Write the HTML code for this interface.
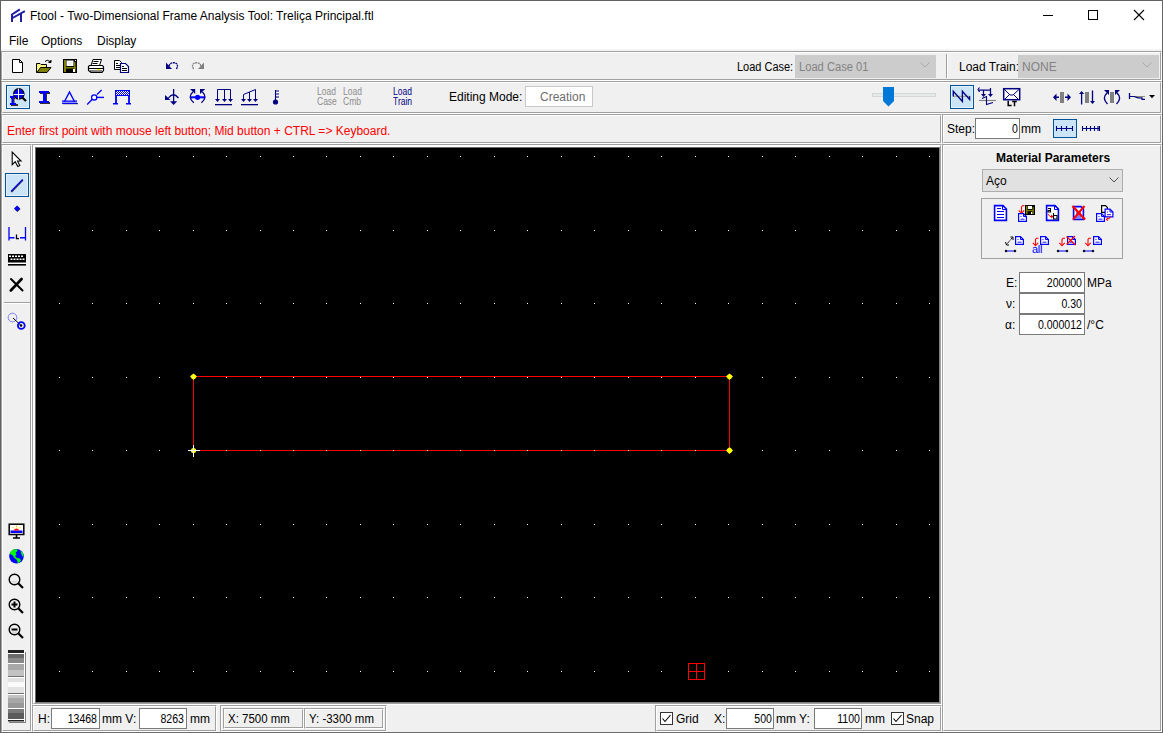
<!DOCTYPE html>
<html><head><meta charset="utf-8">
<style>
*{margin:0;padding:0;box-sizing:border-box}
html,body{width:1163px;height:733px;overflow:hidden}
body{background:#f0f0f0;position:relative;font-family:"Liberation Sans",sans-serif;font-size:12px;color:#000}
.a{position:absolute}
.e{position:absolute;border:1px solid;border-color:#a0a0a0 #fff #fff #a0a0a0}
.e>i{position:absolute;left:0;top:0;right:0;bottom:0;border:1px solid;border-color:#fff #a0a0a0 #a0a0a0 #fff}
.t{position:absolute;white-space:nowrap;line-height:12px}
.hl{position:absolute;height:1px}
.vl{position:absolute;width:1px}
.inp{position:absolute;background:#fff;border:1px solid #7a7a7a}
.sel{position:absolute;background:#cce4f7;border:1px solid #005499}
svg{position:absolute;overflow:visible}
</style></head><body>
<!-- window frame -->
<div class="a" style="left:0;top:0;width:1163px;height:49px;background:#fff"></div>
<div class="hl" style="left:0;top:49px;width:1163px;height:2px;background:#f4f4f4"></div>
<!-- toolbars -->
<div class="e" style="left:1px;top:51px;width:1161px;height:30px"><i></i></div>
<div class="e" style="left:1px;top:81px;width:1161px;height:33px"><i></i></div>
<!-- status boxes -->
<div class="e" style="left:1px;top:114px;width:941px;height:30px"><i></i></div>
<div class="e" style="left:942px;top:114px;width:220px;height:30px"><i></i></div>
<!-- left column -->
<div class="e" style="left:1px;top:144px;width:31px;height:588px"><i></i></div>
<!-- canvas panel -->
<div class="e" style="left:32px;top:144px;width:910px;height:561px"><i></i></div>
<div class="a" style="left:34px;top:146px;width:906px;height:557px;background:#fff"></div><div class="a" style="left:35px;top:147px;width:904px;height:555px;background:#000;border-top:1px solid #696969;border-left:1px solid #696969"></div><div class="vl" style="left:939px;top:147px;height:556px;background:#808080"></div><div class="hl" style="left:35px;top:702px;width:905px;background:#808080"></div>
<!-- right panel -->
<div class="e" style="left:942px;top:144px;width:220px;height:588px"><i></i></div>
<!-- bottom boxes -->
<div class="e" style="left:32px;top:705px;width:185px;height:27px"><i></i></div>
<div class="e" style="left:220px;top:705px;width:167px;height:27px"><i></i></div>
<div class="e" style="left:655px;top:705px;width:287px;height:27px"><i></i></div>
<div class="hl" style="left:0;top:732px;width:1163px;background:#6c6c6c"></div>
<!-- window borders -->
<div class="hl" style="left:0;top:0;width:1163px;background:#616161"></div>
<div class="vl" style="left:0;top:0;height:733px;background:#646464"></div>
<div class="vl" style="left:1162px;top:0;height:733px;background:#666666"></div>

<!-- title -->
<div class="t" style="left:30px;top:10px">Ftool - Two-Dimensional Frame Analysis Tool: Treliça Principal.ftl</div>
<!-- menu -->
<div class="t" style="left:9px;top:35px">File</div>
<div class="t" style="left:41px;top:35px">Options</div>
<div class="t" style="left:97px;top:35px">Display</div>

<!-- toolbar1 right -->
<div class="t" style="left:737px;top:61px;transform:scaleX(0.915);transform-origin:0 0">Load Case:</div>
<div class="a" style="left:795px;top:55px;width:141px;height:23px;background:#cccccc"></div>
<div class="t" style="left:799px;top:61px;color:#838383;transform:scaleX(0.93);transform-origin:0 0">Load Case 01</div>
<div class="vl" style="left:946px;top:54px;height:24px;background:#a0a0a0"></div><div class="vl" style="left:947px;top:54px;height:24px;background:#fff"></div>
<div class="t" style="left:959px;top:61px">Load Train:</div>
<div class="a" style="left:1018px;top:55px;width:141px;height:23px;background:#cccccc"></div>
<div class="t" style="left:1022px;top:61px;color:#838383">NONE</div>

<!-- toolbar2 -->
<div class="t" style="left:449px;top:91px">Editing Mode:</div>
<div class="a" style="left:525px;top:86px;width:68px;height:21px;background:#fff;border:1px solid #c8c8c8"></div>
<div class="t" style="left:540px;top:91px;color:#6d6d6d">Creation</div>

<!-- status -->
<div class="t" style="left:7px;top:125px;color:#ff0000">Enter first point with mouse left button; Mid button + CTRL =&gt; Keyboard.</div>
<div class="t" style="left:947px;top:123px">Step:</div>
<div class="inp" style="left:975px;top:118px;width:45px;height:21px"></div>
<div class="t" style="left:975px;width:43px;text-align:right;top:123px;transform:scaleX(0.88);transform-origin:100% 0">0</div>
<div class="t" style="left:1021px;top:123px">mm</div>

<!-- right panel -->
<div class="t" style="left:996px;top:152px;font-weight:bold">Material Parameters</div>
<div class="a" style="left:982px;top:169px;width:141px;height:23px;background:#e1e1e1;border:1px solid #adadad"></div>
<div class="t" style="left:986px;top:175px">Aço</div>
<div class="a" style="left:981px;top:198px;width:142px;height:61px;border:1px solid #a0a0a0"></div>
<div class="inp" style="left:1019px;top:272px;width:66px;height:21px"></div>
<div class="inp" style="left:1019px;top:293px;width:66px;height:21px"></div>
<div class="inp" style="left:1019px;top:314px;width:66px;height:21px"></div>
<div class="t" style="left:1006px;top:277px">E:</div>
<div class="t" style="left:1019px;width:63px;text-align:right;top:277px;transform:scaleX(0.88);transform-origin:100% 0">200000</div>
<div class="t" style="left:1087px;top:277px">MPa</div>
<div class="t" style="left:1006px;top:298px">ν:</div>
<div class="t" style="left:1019px;width:63px;text-align:right;top:298px;transform:scaleX(0.88);transform-origin:100% 0">0.30</div>
<div class="t" style="left:1005px;top:319px">α:</div>
<div class="t" style="left:1019px;width:63px;text-align:right;top:319px;transform:scaleX(0.88);transform-origin:100% 0">0.000012</div>
<div class="t" style="left:1087px;top:319px">/°C</div>

<!-- bottom -->
<div class="t" style="left:38px;top:713px">H:</div>
<div class="inp" style="left:51px;top:708px;width:49px;height:21px"></div>
<div class="t" style="left:51px;width:46px;text-align:right;top:713px;transform:scaleX(0.88);transform-origin:100% 0">13468</div>
<div class="t" style="left:102px;top:713px">mm V:</div>
<div class="inp" style="left:139px;top:708px;width:48px;height:21px"></div>
<div class="t" style="left:139px;width:45px;text-align:right;top:713px;transform:scaleX(0.88);transform-origin:100% 0">8263</div>
<div class="t" style="left:190px;top:713px">mm</div>
<div class="e" style="left:223px;top:708px;width:81px;height:21px"><i></i></div>
<div class="e" style="left:304px;top:708px;width:80px;height:21px"><i></i></div>
<div class="t" style="left:228px;top:713px;transform:scaleX(0.955);transform-origin:0 0">X: 7500 mm</div>
<div class="t" style="left:309px;top:713px;transform:scaleX(0.955);transform-origin:0 0">Y: -3300 mm</div>
<div class="t" style="left:676px;top:713px">Grid</div>
<div class="t" style="left:714px;top:713px">X:</div>
<div class="inp" style="left:726px;top:708px;width:48px;height:21px"></div>
<div class="t" style="left:726px;width:46px;text-align:right;top:713px;transform:scaleX(0.88);transform-origin:100% 0">500</div>
<div class="t" style="left:776px;top:713px">mm Y:</div>
<div class="inp" style="left:814px;top:708px;width:48px;height:21px"></div>
<div class="t" style="left:814px;width:46px;text-align:right;top:713px;transform:scaleX(0.88);transform-origin:100% 0">1100</div>
<div class="t" style="left:865px;top:713px">mm</div>
<div class="t" style="left:906px;top:713px">Snap</div>


<!-- title icon -->
<svg style="left:0;top:0" width="30" height="30"><g stroke="#1f1f9f" stroke-width="2" fill="none" stroke-linecap="square">
<path d="M12,21 V14.5 L19,10"/><path d="M12.5,18 L24,11.5"/><path d="M21,21 V15"/></g></svg>
<!-- window controls -->
<div class="hl" style="left:1043px;top:15px;width:10px;background:#000"></div>
<div class="a" style="left:1088px;top:10px;width:10px;height:10px;border:1px solid #000"></div>
<svg style="left:1133px;top:9px" width="12" height="12"><path d="M1,1 L11,11 M11,1 L1,11" stroke="#000" stroke-width="1.1"/></svg>

<!-- toolbar1 icons -->
<svg style="left:12px;top:59px" width="12" height="15"><path d="M0.5,0.5 H7.5 L10.5,3.5 V13.5 H0.5 Z" fill="#fff" stroke="#000"/><path d="M7.5,0.5 V3.5 H10.5" fill="none" stroke="#000"/></svg>
<svg style="left:36px;top:59px" width="16" height="15">
<defs><pattern id="ychk" width="2" height="2" patternUnits="userSpaceOnUse"><rect width="2" height="2" fill="#fff"/><rect width="1" height="1" fill="#ffff00"/><rect x="1" y="1" width="1" height="1" fill="#ffff00"/></pattern></defs><path d="M0.5,4.5 H4 L5,5.5 H10.5 V13.5 H0.5 Z" fill="url(#ychk)" stroke="#000"/>
<path d="M1,13.5 L4.5,8.5 H15 L11,13.5 Z" fill="#808000" stroke="#000"/>
<path d="M9,2.5 Q11,0 14,2.5" fill="none" stroke="#000"/><path d="M12.5,3.5 H15 V1" fill="#000" stroke="#000"/></svg>
<svg style="left:63px;top:59px" width="14" height="14"><rect x="0" y="0" width="14" height="14" fill="#000"/><rect x="1" y="1" width="2" height="12" fill="#808000"/><rect x="11" y="3" width="1.5" height="10" fill="#808000"/><rect x="1" y="8" width="12" height="1.5" fill="#808000"/><rect x="3.5" y="1.5" width="7" height="5.5" fill="#fff"/><rect x="4.5" y="2.5" width="5" height="3.5" fill="#f0f0f0"/><rect x="10" y="10" width="2" height="3" fill="#fff"/><rect x="12" y="1" width="1" height="1" fill="#fff"/></svg>
<svg style="left:88px;top:59px" width="17" height="15">
<path d="M5,0.5 H13.5 L11.5,6.5 H3 Z" fill="#fff" stroke="#000"/><path d="M5.5,2.5 H10.5 M4.5,4.5 H9.5" stroke="#000"/>
<path d="M1.5,6.5 H14.5 L15.5,8 V11.5 L14,13.5 H3 L0.5,11.5 V7.5 Z" fill="#fff" stroke="#000" stroke-width="1.2"/>
<path d="M1,9.5 H15 M2,12 H14" stroke="#000" stroke-width="1.2"/><rect x="9" y="10" width="3" height="1.2" fill="#ffff00"/></svg>
<svg style="left:114px;top:60px" width="16" height="14">
<path d="M0.5,0.5 H5.5 L7.5,2.5 V9.5 H0.5 Z" fill="#fff" stroke="#000"/><path d="M2,3.5 H4 M2,5.5 H6 M2,7.5 H6" stroke="#000"/>
<path d="M6.5,3.5 H11.5 L14.5,6.5 V12.5 H6.5 Z" fill="#fff" stroke="#000080" stroke-width="1.2"/><path d="M8,6.5 H10 M8,8.5 H13 M8,10.5 H13" stroke="#000"/></svg>
<svg style="left:166px;top:62px" width="13" height="8"><path d="M0,0.5 L0,7 H6 Z" fill="#000080"/><path d="M3,4 Q4,1 6.5,0.8 Q11,0.5 11.5,3.5 Q11.5,5 10.5,7" fill="none" stroke="#000080" stroke-width="1.3" stroke-dasharray="2 0.6"/></svg>
<svg style="left:192px;top:62px" width="13" height="8"><path d="M12,0.5 L12,7 H6 Z" fill="#808080"/><path d="M9,4 Q8,1 5.5,0.8 Q1,0.5 0.5,3.5 Q0.5,5 1.5,7" fill="none" stroke="#808080" stroke-width="1.3" stroke-dasharray="2 0.6"/></svg>


<!-- toolbar2 icons -->
<div class="sel" style="left:6px;top:85px;width:24px;height:24px"><div class="a" style="left:0;top:0;right:0;bottom:0;border:1px solid #e4f1fb"></div></div>
<svg style="left:6px;top:85px" width="24" height="24">
<circle cx="12.8" cy="8.9" r="5.2" fill="#0000ff" stroke="#000" stroke-width="1.2"/>
<path d="M12.5,3.5 V14.5 M7.5,9.5 H18" stroke="#fff" stroke-width="1"/>
<path d="M16.5,12.8 L20,16" stroke="#000" stroke-width="2.2"/>
<g fill="#403020"><rect x="5" y="12" width="4" height="2"/><rect x="6.5" y="13" width="2" height="7"/><rect x="5" y="19" width="7" height="2"/></g>
<g fill="#0000ff"><rect x="4" y="11" width="4" height="2"/><rect x="5.5" y="12" width="2" height="7"/><rect x="4" y="18" width="6" height="2"/></g>
</svg>
<svg style="left:39px;top:91px" width="12" height="13">
<g fill="#303030"><rect x="1" y="1" width="10" height="2"/><rect x="5" y="2" width="3" height="9"/><rect x="1" y="11" width="10" height="2"/></g>
<g fill="#0000ff"><rect x="0" y="0" width="10" height="2"/><rect x="4" y="1" width="3" height="9"/><rect x="0" y="10" width="10" height="2"/></g></svg>
<svg style="left:62px;top:90px" width="17" height="15">
<path d="M2.5,11.5 L7.5,2 L12.5,11.5" fill="none" stroke="#0000ff" stroke-width="1.4"/>
<rect x="1" y="13" width="15" height="1.2" fill="#303030"/>
<rect x="0" y="10.5" width="15" height="1.3" fill="#0000ff"/><rect x="0" y="12.6" width="15" height="1.3" fill="#0000ff"/></svg>
<svg style="left:86px;top:89px" width="19" height="17">
<path d="M1.2,15.5 L7,9.5 M11,5.5 L15.6,1" stroke="#0000ff" stroke-width="1.3"/>
<circle cx="8.2" cy="8.4" r="2.6" fill="#fff" stroke="#0000ff" stroke-width="1.3"/>
<path d="M10.8,8.4 H18" stroke="#0000ff" stroke-width="1.4"/></svg>
<svg style="left:113px;top:90px" width="19" height="15">
<defs><pattern id="chk" width="2" height="2" patternUnits="userSpaceOnUse"><rect width="2" height="2" fill="#fff"/><rect width="1" height="1" fill="#0000ff"/><rect x="1" y="1" width="1" height="1" fill="#0000ff"/></pattern></defs>
<rect x="2" y="0" width="15" height="6" fill="#0000ff"/><rect x="3" y="1" width="13" height="4" fill="url(#chk)"/>
<path d="M3,5 V13.5 M16,5 V13.5" stroke="#0000ff" stroke-width="1.8"/>
<path d="M0,13.7 H5 M13,13.7 H18" stroke="#0000ff" stroke-width="1.6"/></svg>
<svg style="left:164px;top:89px" width="16" height="17">
<path d="M9.6,0 V13" stroke="#000080" stroke-width="1.3"/>
<path d="M6,12.3 H13.2 L9.6,16 Z" fill="#000080"/>
<path d="M4.5,9 Q9,2.5 14.5,9" fill="none" stroke="#000080" stroke-width="1.3"/>
<path d="M1,6 V11 H6.5 Z" fill="#000080"/></svg>
<svg style="left:189px;top:89px" width="18" height="16">
<path d="M4.8,13.8 Q-1.8,8 3.8,3 M12.4,13.8 Q19,8 13.4,3" fill="none" stroke="#000080" stroke-width="1.4"/>
<path d="M1,0 H6.2 V5 Z M16.2,0 H11 V5 Z" fill="#000080"/>
<rect x="1.5" y="7.3" width="14.5" height="2" fill="#0000ff"/><circle cx="8.6" cy="8.3" r="2.6" fill="#0000ff"/></svg>
<svg style="left:214px;top:89px" width="19" height="17">
<path d="M3.5,0.5 H16.5 M3.5,0.5 V10 M10.5,0.5 V10 M16.5,0.5 V10" fill="none" stroke="#000080" stroke-width="1"/>
<path d="M1,10 H6 L3.5,13 Z M8,10 H13 L10.5,13 Z M14,10 H19 L16.5,13 Z" fill="#000080"/>
<rect x="1" y="15" width="17" height="1.3" fill="#000080"/></svg>
<svg style="left:240px;top:89px" width="19" height="17">
<path d="M3.5,10 V5.5 L15.5,0.5 V10 M9.5,10 V3" fill="none" stroke="#000080" stroke-width="1"/>
<path d="M1,10 H6 L3.5,13 Z M7,10 H12 L9.5,13 Z M13,10 H18 L15.5,13 Z" fill="#000080"/>
<rect x="1" y="15" width="17" height="1.3" fill="#000080"/></svg>
<svg style="left:272px;top:90px" width="8" height="15">
<path d="M3.5,0 V10 M3.5,1 H7 M3.5,4 H7 M3.5,7 H7" stroke="#000080" stroke-width="1.1"/>
<circle cx="3.5" cy="12" r="2.6" fill="#000080"/></svg>
<div class="t" style="left:317px;top:87px;font-size:10px;line-height:10px;color:#8c8c8c;transform:scaleX(0.85);transform-origin:0 0">Load<br>Case</div>
<div class="t" style="left:343px;top:87px;font-size:10px;line-height:10px;color:#8c8c8c;transform:scaleX(0.85);transform-origin:0 0">Load<br>Cmb</div>
<div class="t" style="left:393px;top:87px;font-size:10px;line-height:10px;color:#000080;transform:scaleX(0.85);transform-origin:0 0">Load<br>Train</div>

<!-- slider -->
<div class="a" style="left:872px;top:93px;width:64px;height:4px;background:#e7eaea;border:1px solid #d6d6d6"></div>
<svg style="left:883px;top:87px" width="11" height="20"><path d="M0,0 H11 V14 L5.5,19.5 L0,14 Z" fill="#0078d7"/></svg>

<div class="sel" style="left:950px;top:85px;width:24px;height:24px"><div class="a" style="left:0;top:0;right:0;bottom:0;border:1px solid #e4f1fb"></div></div>
<svg style="left:950px;top:85px" width="24" height="24">
<path d="M3,11.3 H19.6" stroke="#9a9a70" stroke-width="1"/>
<path d="M3.3,11.5 V6.2 L12.4,16.5 V6.2 L19.6,14.4 V11.3" fill="none" stroke="#000080" stroke-width="1.35" stroke-linejoin="miter"/></svg>
<svg style="left:977px;top:87px" width="20" height="19">
<path d="M2,3.2 H14 M6.5,3.2 V8 M13.5,1 V8" stroke="#000080" stroke-width="1.2"/>
<path d="M2.5,0.5 L1,2.5 L2.5,5" fill="none" stroke="#000080" stroke-width="1.1"/>
<path d="M4,7 H9 L6.5,10 Z M11,7 H16 L13.5,10 Z" fill="#000080"/>
<path d="M2,13.5 H19" stroke="#808080" stroke-width="1.1"/>
<path d="M5,11.5 L9.5,9.5 V17.5 L16,15.5" fill="none" stroke="#000080" stroke-width="1.1"/></svg>
<svg style="left:1003px;top:88px" width="18" height="18">
<rect x="0.7" y="0.7" width="16" height="11" fill="#fff" stroke="#000080" stroke-width="1.5"/>
<path d="M1,1 L7,7 H10 L16.5,1 M1.5,11.5 L6.5,6.5 M10.5,6.5 L15.5,11.5" fill="none" stroke="#000080" stroke-width="1"/></svg>
<svg style="left:1006px;top:100px" width="12" height="7"><path d="M2.2,0.8 V5.4 H5.6 M6.2,1.5 H10.8 M8.5,1.5 V6.2" fill="none" stroke="#000" stroke-width="1.5"/></svg>
<svg style="left:1052px;top:91px" width="21" height="13">
<rect x="8" y="1" width="4" height="11" fill="#808080"/>
<path d="M1,6.3 L4.5,2.5 V10 Z M19,6.3 L15.5,2.5 V10 Z" fill="#000080"/>
<path d="M4,6.3 H7 M13,6.3 H16" stroke="#000080" stroke-width="1.4"/></svg>
<svg style="left:1078px;top:90px" width="19" height="15">
<rect x="7" y="2" width="4" height="11" fill="#808080"/>
<path d="M3.6,2 V14.5 M14.5,0.5 V12" stroke="#000080" stroke-width="1.3"/>
<path d="M1,4 L3.6,1 L6.2,4 Z M12,11 H17 L14.5,14 Z" fill="#000080"/></svg>
<svg style="left:1102px;top:90px" width="20" height="15">
<rect x="8" y="2" width="4" height="11" fill="#808080"/>
<path d="M5.5,14 Q-0.5,8 5,3 M14.5,14 Q20.5,8 15,3" fill="none" stroke="#000080" stroke-width="1.4"/>
<path d="M2,0 H7 V5 Z M18,0 H13 V5 Z" fill="#000080"/></svg>
<svg style="left:1128px;top:93px" width="18" height="8">
<path d="M1.5,0 V6" stroke="#000080" stroke-width="1.3"/>
<path d="M7,3.5 H17" stroke="#909080" stroke-width="1"/>
<path d="M1.5,3.5 H6 L10,4.8 H14 V6.3 H17" fill="none" stroke="#000080" stroke-width="1.2"/></svg>
<svg style="left:1149px;top:95px" width="7" height="4"><path d="M0,0 H6 L3,3.2 Z" fill="#000"/></svg>


<!-- left column icons -->
<svg style="left:11px;top:151px" width="12" height="17">
<path d="M1.2,1 V13.6 L4.2,10.7 L6.8,15.5 L8.8,14.6 L6.5,10 H10 Z" fill="#fff" stroke="#000" stroke-width="1.1" stroke-linejoin="miter"/></svg>
<div class="sel" style="left:5px;top:173px;width:24px;height:24px"><div class="a" style="left:0;top:0;right:0;bottom:0;border:1px solid #e4f1fb"></div></div>
<svg style="left:5px;top:173px" width="24" height="24"><path d="M6.5,19 L18,7" stroke="#302850" stroke-width="1.3"/><path d="M6,18.3 L17.6,6.3" stroke="#0000ff" stroke-width="1.2"/></svg>
<svg style="left:13px;top:205px" width="10" height="9"><path d="M1.5,4 L4.5,1 L7.5,4 L4.5,7 Z" fill="#403020"/><path d="M1,3.5 L4,0.5 L7,3.5 L4,6.5 Z" fill="#0000ff"/></svg>
<svg style="left:8px;top:227px" width="19" height="15">
<path d="M1,0 V13.5 M17.5,0 V13.5" stroke="#0000ff" stroke-width="1.3"/>
<path d="M1,10.8 H6.5 M12,10.8 H17.5" stroke="#0000ff" stroke-width="1.6"/>
<path d="M8.5,7.5 V11.7 H11" fill="none" stroke="#000" stroke-width="1.3"/></svg>
<svg style="left:8px;top:253px" width="19" height="14">
<rect x="0" y="1" width="18" height="8.5" fill="#000"/>
<g fill="#fff"><rect x="1" y="2.5" width="2" height="1.5"/><rect x="4" y="2.5" width="2" height="1.5"/><rect x="7" y="2.5" width="2" height="1.5"/><rect x="10" y="2.5" width="2" height="1.5"/><rect x="13" y="2.5" width="2" height="1.5"/>
<rect x="2.5" y="5.5" width="2" height="1.5"/><rect x="5.5" y="5.5" width="2" height="1.5"/><rect x="8.5" y="5.5" width="2" height="1.5"/><rect x="11.5" y="5.5" width="2" height="1.5"/><rect x="14.5" y="5.5" width="2" height="1.5"/>
<rect x="0" y="10" width="18" height="1"/></g>
<rect x="0" y="11" width="18" height="1.6" fill="#000"/></svg>
<svg style="left:9px;top:277px" width="16" height="16">
<path d="M1.8,13.5 L12.6,2" stroke="#000" stroke-width="2.6" stroke-linecap="round"/>
<path d="M2,2 L13.5,13.5" stroke="#000" stroke-width="2" stroke-linecap="round"/></svg>
<div class="hl" style="left:4px;top:302px;width:26px;background:#a0a0a0"></div>
<div class="hl" style="left:4px;top:303px;width:26px;background:#fff"></div>
<svg style="left:7px;top:312px" width="20" height="19">
<circle cx="5.5" cy="5.5" r="4.3" fill="none" stroke="#0000ff" stroke-width="1" stroke-dasharray="1 1.2"/>
<path d="M6,6 L13.5,13" stroke="#000" stroke-width="1"/>
<circle cx="14.3" cy="13.5" r="3.4" fill="none" stroke="#0000ff" stroke-width="1.8"/><circle cx="14" cy="13.5" r="1.3" fill="#000"/></svg>

<svg style="left:8px;top:523px" width="18" height="17">
<rect x="1.2" y="1.2" width="14.6" height="10.3" fill="#fff" stroke="#000" stroke-width="1.5"/>
<rect x="2.5" y="7.5" width="12" height="2.5" fill="#0000ff"/>
<path d="M5.5,7.5 Q8.5,3.5 11.5,7.5 Z" fill="#ff0000"/>
<path d="M8.5,2.5 V4.5 M4.5,4 L6,5.5 M12.5,4 L11,5.5" stroke="#ffd000" stroke-width="1"/>
<path d="M8.5,12 V14.5 M5,15 H12" stroke="#000" stroke-width="1.6"/></svg>
<svg style="left:8px;top:548px" width="17" height="17">
<circle cx="8.5" cy="8.3" r="7.3" fill="#0000ff"/>
<path d="M2.5,4 L5,1.5 L9,1.2 L9.5,3 L7.5,4.5 L8.5,6.5 L7,8 L9,10 L12,10.5 L13,12.5 L11,15 L9.5,14.5 L9,12 L6,9.5 L4.5,7 L2,6 Z M12.5,2.5 L15,5 L15.5,9 L14,8 L13,5 Z" fill="#00ff00"/></svg>
<svg style="left:8px;top:573px" width="17" height="17">
<circle cx="6.5" cy="6.5" r="5.3" fill="#f0f0f0" stroke="#000" stroke-width="1.4"/>
<path d="M4.5,8.5 Q6.5,10 8.5,8.5" stroke="#c0c0c0" fill="none" stroke-width="1"/>
<path d="M10.5,10.5 L15,15" stroke="#000" stroke-width="2.2"/></svg>
<svg style="left:8px;top:598px" width="17" height="17">
<circle cx="6.5" cy="6.5" r="5.3" fill="#f0f0f0" stroke="#000" stroke-width="1.4"/>
<path d="M6.5,3.5 V9.5 M3.5,6.5 H9.5" stroke="#000" stroke-width="2"/>
<path d="M10.5,10.5 L15,15" stroke="#000" stroke-width="2.2"/></svg>
<svg style="left:8px;top:623px" width="17" height="17">
<circle cx="6.5" cy="6.5" r="5.3" fill="#f0f0f0" stroke="#000" stroke-width="1.4"/>
<path d="M3.5,6.5 H9.5" stroke="#000" stroke-width="2"/>
<path d="M4.5,8.7 Q6.5,10 8.5,8.7" stroke="#c0c0c0" fill="none" stroke-width="1"/>
<path d="M10.5,10.5 L15,15" stroke="#000" stroke-width="2.2"/></svg>
<svg style="left:7px;top:650px" width="20" height="74">
<rect x="2" y="2" width="17" height="71" fill="#808080"/>
<rect x="1" y="1" width="17" height="71" fill="#fff"/>
<rect x="1" y="0" width="16" height="3" fill="#202020"/>
<rect x="1" y="4" width="16" height="4" fill="#6a6a6a"/><rect x="1" y="8" width="16" height="5" fill="#8a8a8a"/>
<rect x="1" y="14" width="16" height="6" fill="#a8a8a8"/><rect x="1" y="20" width="16" height="6" fill="#c2c2c2"/>
<rect x="1" y="26" width="16" height="1" fill="#707070"/>
<rect x="1" y="28" width="16" height="4" fill="#e2e2e2"/><rect x="1" y="32" width="16" height="5" fill="#fafafa"/><rect x="1" y="37" width="16" height="6" fill="#e2e2e2"/>
<rect x="1" y="43" width="16" height="1" fill="#707070"/>
<rect x="1" y="45" width="16" height="3" fill="#c2c2c2"/><rect x="1" y="48" width="16" height="5" fill="#a8a8a8"/><rect x="1" y="53" width="16" height="5" fill="#989898"/>
<rect x="1" y="59" width="16" height="4" fill="#7a7a7a"/><rect x="1" y="63" width="16" height="6" fill="#5c5c5c"/>
<rect x="1" y="70" width="16" height="1.5" fill="#202020"/></svg>


<!-- canvas content -->
<svg style="left:0;top:0" width="1163" height="733" shape-rendering="crispEdges">
<g fill="#ff0000"><rect x="193" y="376" width="537" height="1"/><rect x="193" y="450" width="537" height="1"/><rect x="193" y="376" width="1" height="75"/><rect x="729" y="376" width="1" height="75"/></g>
<g fill="#ff0000"><rect x="688" y="663" width="17" height="1"/><rect x="688" y="671" width="17" height="1"/><rect x="688" y="679" width="17" height="1"/><rect x="688" y="663" width="1" height="17"/><rect x="696" y="663" width="1" height="17"/><rect x="704" y="663" width="1" height="17"/></g>
<g fill="#fff"><rect x="59" y="156" width="1" height="1"/><rect x="59" y="230" width="1" height="1"/><rect x="59" y="303" width="1" height="1"/><rect x="59" y="377" width="1" height="1"/><rect x="59" y="450" width="1" height="1"/><rect x="59" y="524" width="1" height="1"/><rect x="59" y="597" width="1" height="1"/><rect x="59" y="671" width="1" height="1"/><rect x="92" y="156" width="1" height="1"/><rect x="92" y="230" width="1" height="1"/><rect x="92" y="303" width="1" height="1"/><rect x="92" y="377" width="1" height="1"/><rect x="92" y="450" width="1" height="1"/><rect x="92" y="524" width="1" height="1"/><rect x="92" y="597" width="1" height="1"/><rect x="92" y="671" width="1" height="1"/><rect x="126" y="156" width="1" height="1"/><rect x="126" y="230" width="1" height="1"/><rect x="126" y="303" width="1" height="1"/><rect x="126" y="377" width="1" height="1"/><rect x="126" y="450" width="1" height="1"/><rect x="126" y="524" width="1" height="1"/><rect x="126" y="597" width="1" height="1"/><rect x="126" y="671" width="1" height="1"/><rect x="159" y="156" width="1" height="1"/><rect x="159" y="230" width="1" height="1"/><rect x="159" y="303" width="1" height="1"/><rect x="159" y="377" width="1" height="1"/><rect x="159" y="450" width="1" height="1"/><rect x="159" y="524" width="1" height="1"/><rect x="159" y="597" width="1" height="1"/><rect x="159" y="671" width="1" height="1"/><rect x="193" y="156" width="1" height="1"/><rect x="193" y="230" width="1" height="1"/><rect x="193" y="303" width="1" height="1"/><rect x="193" y="377" width="1" height="1"/><rect x="193" y="450" width="1" height="1"/><rect x="193" y="524" width="1" height="1"/><rect x="193" y="597" width="1" height="1"/><rect x="193" y="671" width="1" height="1"/><rect x="226" y="156" width="1" height="1"/><rect x="226" y="230" width="1" height="1"/><rect x="226" y="303" width="1" height="1"/><rect x="226" y="377" width="1" height="1"/><rect x="226" y="450" width="1" height="1"/><rect x="226" y="524" width="1" height="1"/><rect x="226" y="597" width="1" height="1"/><rect x="226" y="671" width="1" height="1"/><rect x="260" y="156" width="1" height="1"/><rect x="260" y="230" width="1" height="1"/><rect x="260" y="303" width="1" height="1"/><rect x="260" y="377" width="1" height="1"/><rect x="260" y="450" width="1" height="1"/><rect x="260" y="524" width="1" height="1"/><rect x="260" y="597" width="1" height="1"/><rect x="260" y="671" width="1" height="1"/><rect x="293" y="156" width="1" height="1"/><rect x="293" y="230" width="1" height="1"/><rect x="293" y="303" width="1" height="1"/><rect x="293" y="377" width="1" height="1"/><rect x="293" y="450" width="1" height="1"/><rect x="293" y="524" width="1" height="1"/><rect x="293" y="597" width="1" height="1"/><rect x="293" y="671" width="1" height="1"/><rect x="326" y="156" width="1" height="1"/><rect x="326" y="230" width="1" height="1"/><rect x="326" y="303" width="1" height="1"/><rect x="326" y="377" width="1" height="1"/><rect x="326" y="450" width="1" height="1"/><rect x="326" y="524" width="1" height="1"/><rect x="326" y="597" width="1" height="1"/><rect x="326" y="671" width="1" height="1"/><rect x="360" y="156" width="1" height="1"/><rect x="360" y="230" width="1" height="1"/><rect x="360" y="303" width="1" height="1"/><rect x="360" y="377" width="1" height="1"/><rect x="360" y="450" width="1" height="1"/><rect x="360" y="524" width="1" height="1"/><rect x="360" y="597" width="1" height="1"/><rect x="360" y="671" width="1" height="1"/><rect x="393" y="156" width="1" height="1"/><rect x="393" y="230" width="1" height="1"/><rect x="393" y="303" width="1" height="1"/><rect x="393" y="377" width="1" height="1"/><rect x="393" y="450" width="1" height="1"/><rect x="393" y="524" width="1" height="1"/><rect x="393" y="597" width="1" height="1"/><rect x="393" y="671" width="1" height="1"/><rect x="427" y="156" width="1" height="1"/><rect x="427" y="230" width="1" height="1"/><rect x="427" y="303" width="1" height="1"/><rect x="427" y="377" width="1" height="1"/><rect x="427" y="450" width="1" height="1"/><rect x="427" y="524" width="1" height="1"/><rect x="427" y="597" width="1" height="1"/><rect x="427" y="671" width="1" height="1"/><rect x="460" y="156" width="1" height="1"/><rect x="460" y="230" width="1" height="1"/><rect x="460" y="303" width="1" height="1"/><rect x="460" y="377" width="1" height="1"/><rect x="460" y="450" width="1" height="1"/><rect x="460" y="524" width="1" height="1"/><rect x="460" y="597" width="1" height="1"/><rect x="460" y="671" width="1" height="1"/><rect x="494" y="156" width="1" height="1"/><rect x="494" y="230" width="1" height="1"/><rect x="494" y="303" width="1" height="1"/><rect x="494" y="377" width="1" height="1"/><rect x="494" y="450" width="1" height="1"/><rect x="494" y="524" width="1" height="1"/><rect x="494" y="597" width="1" height="1"/><rect x="494" y="671" width="1" height="1"/><rect x="527" y="156" width="1" height="1"/><rect x="527" y="230" width="1" height="1"/><rect x="527" y="303" width="1" height="1"/><rect x="527" y="377" width="1" height="1"/><rect x="527" y="450" width="1" height="1"/><rect x="527" y="524" width="1" height="1"/><rect x="527" y="597" width="1" height="1"/><rect x="527" y="671" width="1" height="1"/><rect x="561" y="156" width="1" height="1"/><rect x="561" y="230" width="1" height="1"/><rect x="561" y="303" width="1" height="1"/><rect x="561" y="377" width="1" height="1"/><rect x="561" y="450" width="1" height="1"/><rect x="561" y="524" width="1" height="1"/><rect x="561" y="597" width="1" height="1"/><rect x="561" y="671" width="1" height="1"/><rect x="594" y="156" width="1" height="1"/><rect x="594" y="230" width="1" height="1"/><rect x="594" y="303" width="1" height="1"/><rect x="594" y="377" width="1" height="1"/><rect x="594" y="450" width="1" height="1"/><rect x="594" y="524" width="1" height="1"/><rect x="594" y="597" width="1" height="1"/><rect x="594" y="671" width="1" height="1"/><rect x="628" y="156" width="1" height="1"/><rect x="628" y="230" width="1" height="1"/><rect x="628" y="303" width="1" height="1"/><rect x="628" y="377" width="1" height="1"/><rect x="628" y="450" width="1" height="1"/><rect x="628" y="524" width="1" height="1"/><rect x="628" y="597" width="1" height="1"/><rect x="628" y="671" width="1" height="1"/><rect x="661" y="156" width="1" height="1"/><rect x="661" y="230" width="1" height="1"/><rect x="661" y="303" width="1" height="1"/><rect x="661" y="377" width="1" height="1"/><rect x="661" y="450" width="1" height="1"/><rect x="661" y="524" width="1" height="1"/><rect x="661" y="597" width="1" height="1"/><rect x="661" y="671" width="1" height="1"/><rect x="695" y="156" width="1" height="1"/><rect x="695" y="230" width="1" height="1"/><rect x="695" y="303" width="1" height="1"/><rect x="695" y="377" width="1" height="1"/><rect x="695" y="450" width="1" height="1"/><rect x="695" y="524" width="1" height="1"/><rect x="695" y="597" width="1" height="1"/><rect x="728" y="156" width="1" height="1"/><rect x="728" y="230" width="1" height="1"/><rect x="728" y="303" width="1" height="1"/><rect x="728" y="377" width="1" height="1"/><rect x="728" y="450" width="1" height="1"/><rect x="728" y="524" width="1" height="1"/><rect x="728" y="597" width="1" height="1"/><rect x="728" y="671" width="1" height="1"/><rect x="762" y="156" width="1" height="1"/><rect x="762" y="230" width="1" height="1"/><rect x="762" y="303" width="1" height="1"/><rect x="762" y="377" width="1" height="1"/><rect x="762" y="450" width="1" height="1"/><rect x="762" y="524" width="1" height="1"/><rect x="762" y="597" width="1" height="1"/><rect x="762" y="671" width="1" height="1"/><rect x="795" y="156" width="1" height="1"/><rect x="795" y="230" width="1" height="1"/><rect x="795" y="303" width="1" height="1"/><rect x="795" y="377" width="1" height="1"/><rect x="795" y="450" width="1" height="1"/><rect x="795" y="524" width="1" height="1"/><rect x="795" y="597" width="1" height="1"/><rect x="795" y="671" width="1" height="1"/><rect x="829" y="156" width="1" height="1"/><rect x="829" y="230" width="1" height="1"/><rect x="829" y="303" width="1" height="1"/><rect x="829" y="377" width="1" height="1"/><rect x="829" y="450" width="1" height="1"/><rect x="829" y="524" width="1" height="1"/><rect x="829" y="597" width="1" height="1"/><rect x="829" y="671" width="1" height="1"/><rect x="862" y="156" width="1" height="1"/><rect x="862" y="230" width="1" height="1"/><rect x="862" y="303" width="1" height="1"/><rect x="862" y="377" width="1" height="1"/><rect x="862" y="450" width="1" height="1"/><rect x="862" y="524" width="1" height="1"/><rect x="862" y="597" width="1" height="1"/><rect x="862" y="671" width="1" height="1"/><rect x="896" y="156" width="1" height="1"/><rect x="896" y="230" width="1" height="1"/><rect x="896" y="303" width="1" height="1"/><rect x="896" y="377" width="1" height="1"/><rect x="896" y="450" width="1" height="1"/><rect x="896" y="524" width="1" height="1"/><rect x="896" y="597" width="1" height="1"/><rect x="896" y="671" width="1" height="1"/><rect x="929" y="156" width="1" height="1"/><rect x="929" y="230" width="1" height="1"/><rect x="929" y="303" width="1" height="1"/><rect x="929" y="377" width="1" height="1"/><rect x="929" y="450" width="1" height="1"/><rect x="929" y="524" width="1" height="1"/><rect x="929" y="597" width="1" height="1"/><rect x="929" y="671" width="1" height="1"/></g>
</svg>
<svg style="left:0;top:0" width="1163" height="733">
<g fill="#ffff00"><path d="M193.5,373.5 L197,376.5 L193.5,380 L190,376.5 Z"/><circle cx="193.5" cy="376.8" r="2.4"/>
<path d="M729.5,447 L733,450.5 L729.5,454 L726,450.5 Z"/><circle cx="729.5" cy="450.5" r="2.4"/>
<path d="M729.5,373.5 L733,376.5 L729.5,380 L726,376.5 Z"/><circle cx="729.5" cy="376.8" r="2.4"/>
<circle cx="193.5" cy="450.5" r="2.6"/></g>
</svg>
<svg style="left:0;top:0" width="1163" height="733" shape-rendering="crispEdges">
<g fill="#fff"><rect x="193" y="377" width="1" height="1"/><rect x="188" y="450" width="12" height="1"/><rect x="193" y="445" width="1" height="12"/></g>
</svg>

<!-- right panel icons -->
<svg style="left:0;top:0;width:0;height:0"><defs>
<symbol id="sd" viewBox="0 0 9 9" overflow="visible"><path d="M0.6,0.6 H5.5 L8.4,3.5 V8.4 H0.6 Z" fill="#fff" stroke="#0000ff" stroke-width="1.2"/><path d="M5.5,0.6 V3.5 H8.4" fill="none" stroke="#0000ff" stroke-width="1"/><path d="M2.5,3.5 H3.5 M2.5,6.2 H6.5" stroke="#0000ff" stroke-width="0.9"/></symbol>
<symbol id="ra" viewBox="0 0 7 9" overflow="visible"><path d="M6.5,0.7 H4.5 L3.5,2 V7.5" fill="none" stroke="#ff0000" stroke-width="1.1"/><path d="M0.8,5.3 L3.5,8.3 L6.2,5.3" fill="none" stroke="#ff0000" stroke-width="1.1"/></symbol>
<symbol id="bar" viewBox="0 0 12 4" overflow="visible"><path d="M1,2 H11" stroke="#0000ff" stroke-width="1"/><path d="M0,2 L1.5,0.5 L3,2 L1.5,3.5 Z M9,2 L10.5,0.5 L12,2 L10.5,3.5 Z" fill="#000"/></symbol>
</defs></svg>
<svg style="left:993px;top:204px" width="16" height="18">
<path d="M1.6,1.6 H10 L13.4,5 V16.4 H1.6 Z" fill="#fff" stroke="#0000ff" stroke-width="1.6"/><path d="M9.5,1.5 V5.5 H13.5" fill="none" stroke="#0000ff" stroke-width="1"/>
<path d="M4,4.5 H8 M4,7.5 H11 M4,10.5 H11 M4,13.5 H11" stroke="#0000ff" stroke-width="1.1"/></svg>
<svg style="left:1017px;top:204px" width="20" height="18">
<use href="#ra" x="1" y="1" width="7" height="9"/>
<use href="#sd" x="1" y="9" width="9" height="9"/>
<rect x="8" y="1" width="10" height="10" fill="#000"/><rect x="9" y="2" width="1.5" height="8" fill="#808000"/><rect x="15.5" y="3" width="1.2" height="7" fill="#808000"/><rect x="9" y="6" width="8" height="1.2" fill="#808000"/><rect x="11" y="2" width="4" height="3" fill="#fff"/><rect x="14" y="8" width="1.3" height="2" fill="#fff"/></svg>
<svg style="left:1045px;top:204px" width="16" height="18">
<path d="M1.6,1.6 H10 L13.4,5 V16.4 H1.6 Z" fill="#fff" stroke="#0000ff" stroke-width="1.6"/><path d="M9.5,1.5 V5.5 H13.5" fill="none" stroke="#0000ff" stroke-width="1"/>
<path d="M3,4.5 H5.5 V8 H3 V6.5 H5.5" fill="none" stroke="#000" stroke-width="1.1"/>
<path d="M8.5,9 V15 H12 V11.5 H8.5" fill="none" stroke="#000" stroke-width="1.1"/>
<path d="M3,10 L5,12.5 H8 M6,11 L8,12.5 L6,14" fill="none" stroke="#ff0000" stroke-width="1"/></svg>
<svg style="left:1071px;top:204px" width="16" height="18">
<path d="M2.6,2.6 H10 L12.4,5 V15.4 H2.6 Z" fill="#fff" stroke="#0000ff" stroke-width="1.6"/>
<path d="M5,9 H10 M5,11 H10 M5,13 H10" stroke="#0000ff" stroke-width="1"/>
<path d="M1.5,2 L14,15.5" stroke="#ff0000" stroke-width="2.4"/><path d="M13.5,2 L2,15.5" stroke="#ff0000" stroke-width="2"/></svg>
<svg style="left:1095px;top:204px" width="20" height="18">
<path d="M6.6,1.6 H10.5 L12.4,3.5 V8.4 H6.6 Z" fill="#fff" stroke="#000" stroke-width="1.2"/>
<use href="#sd" x="9.5" y="4.5" width="9" height="9"/>
<use href="#sd" x="1" y="9" width="9" height="9"/>
<path d="M15,12.5 V14 L11.5,15.5 M13,14 L11,15.5 L13,16.5" fill="none" stroke="#ff0000" stroke-width="1"/></svg>

<svg style="left:1004px;top:235px" width="21" height="18">
<path d="M2.5,9.5 L8.5,2.5" stroke="#000" stroke-width="1" stroke-dasharray="1.3 0.5"/><path d="M1.5,7 L2.5,10 L5,10 M6.5,2 L9,2 L9,5" fill="none" stroke="#000" stroke-width="1"/>
<use href="#sd" x="11" y="1" width="9" height="9"/>
<use href="#bar" x="0.5" y="14" width="12" height="4"/></svg>
<svg style="left:1031px;top:235px" width="19" height="19">
<use href="#ra" x="1" y="2.5" width="7" height="9"/>
<use href="#sd" x="9" y="1" width="9" height="9"/></svg>
<div class="t" style="left:1032px;top:244px;font-size:11px;line-height:11px;color:#0000ff;letter-spacing:-0.3px">all</div>
<svg style="left:1056px;top:235px" width="21" height="18">
<use href="#ra" x="2.5" y="2.5" width="7" height="9"/>
<use href="#sd" x="11" y="1" width="9" height="9"/>
<path d="M10.5,1.5 L19.5,10 M19,1 L10.5,9.5" stroke="#ff0000" stroke-width="1.1"/>
<use href="#bar" x="0.5" y="14" width="12" height="4"/></svg>
<svg style="left:1082px;top:235px" width="21" height="18">
<use href="#ra" x="2.5" y="2.5" width="7" height="9"/>
<use href="#sd" x="11" y="1" width="9" height="9"/>
<use href="#bar" x="0.5" y="14" width="12" height="4"/></svg>
<svg style="left:1109px;top:177px" width="11" height="7"><path d="M0.5,0.5 L5,5 L9.5,0.5" fill="none" stroke="#505050" stroke-width="1"/></svg>
<svg style="left:920px;top:62px" width="11" height="7"><path d="M0.5,0.5 L5,5 L9.5,0.5" fill="none" stroke="#a8a8a8" stroke-width="1"/></svg>
<svg style="left:1142px;top:62px" width="11" height="7"><path d="M0.5,0.5 L5,5 L9.5,0.5" fill="none" stroke="#a8a8a8" stroke-width="1"/></svg>

<!-- step toggles -->
<div class="sel" style="left:1053px;top:119px;width:24px;height:19px"></div>
<svg style="left:1053px;top:119px" width="50" height="19">
<path d="M3,9.5 H20 M3.5,7 V12 M8.5,7 V12 M13.5,7 V12 M19.5,7 V12" stroke="#000080" stroke-width="1.1"/>
<path d="M29.5,9.5 H47 M29.5,7 V12 M33.5,7 V12 M37.5,7 V12 M41.5,7 V12 M45,7 V12 M46.5,7 V12" stroke="#000080" stroke-width="1.1"/></svg>

<!-- checkboxes -->
<div class="a" style="left:660px;top:712px;width:13px;height:13px;border:1px solid #333;background:#fff"></div>
<svg style="left:660px;top:712px" width="13" height="13"><path d="M2.5,6.5 L5,9.5 L10.5,3" fill="none" stroke="#000" stroke-width="1.1"/></svg>
<div class="a" style="left:891px;top:712px;width:13px;height:13px;border:1px solid #333;background:#fff"></div>
<svg style="left:891px;top:712px" width="13" height="13"><path d="M2.5,6.5 L5,9.5 L10.5,3" fill="none" stroke="#000" stroke-width="1.1"/></svg>

</body></html>
